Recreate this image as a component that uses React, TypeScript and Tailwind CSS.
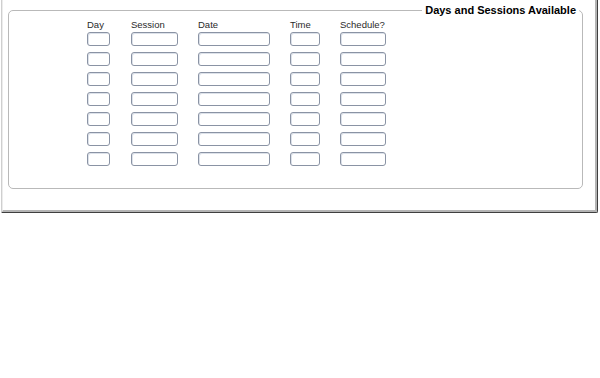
import React from "react";

const cols = ["Day", "Session", "Date", "Time", "Schedule?"];
const widths = ["w-[23px]", "w-[47px]", "w-[72px]", "w-[30px]", "w-[46px]"];

export default function App() {
  const rows = Array.from({ length: 7 });
  return (
    <div className="w-[600px] h-[378px] bg-white font-['Liberation_Sans',Arial,sans-serif]">
      <div className="ml-[1px] w-[597px] h-[213px] border-l border-l-[#cfcfcf] border-r border-r-[#3f3f3f] border-b border-b-[#3f3f3f] rounded-br-[2px]">
        <div className="h-full border-l border-l-[#ececec] border-r-2 border-r-[#b4b4b4] border-b-2 border-b-[#b4b4b4] pl-[5px] pt-[4px]">
          <fieldset className="w-[575px] h-[185px] border border-[#b9b9b9] rounded-[5px] px-0 pb-0 pt-0 m-0">
            <legend className="ml-auto mr-[3px] px-[3px] text-[11px] leading-[13px] font-bold text-black">
              Days and Sessions Available
            </legend>
            <div className="pl-[78px] pt-[2px]">
              <div className="grid grid-cols-[24px_47px_72px_30px_46px] gap-x-[20px] h-[13px]">
                {cols.map((c) => (
                  <div key={c} className="text-[9.5px] leading-[11px] text-[#2a2a2a] whitespace-nowrap">
                    {c}
                  </div>
                ))}
              </div>
              <div className="flex flex-col gap-y-[6px]">
                {rows.map((_, r) => (
                  <div key={r} className="grid grid-cols-[24px_47px_72px_30px_46px] gap-x-[20px]">
                    {widths.map((w, i) => (
                      <div
                        key={i}
                        className={`${w} h-[14px] bg-white border border-[#8a93a4] rounded-[3px] shadow-[inset_1px_1px_0_#dde2ea]`}
                      />
                    ))}
                  </div>
                ))}
              </div>
            </div>
          </fieldset>
        </div>
      </div>
    </div>
  );
}
